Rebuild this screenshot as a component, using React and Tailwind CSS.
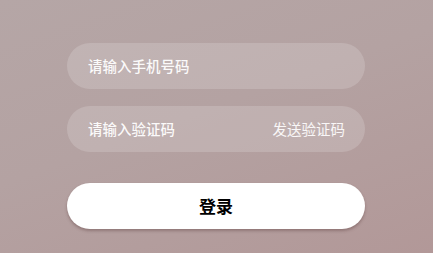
export default function App() {
  return (
    <div
      className="w-[433px] h-[253px] overflow-hidden bg-[linear-gradient(160deg,#b5a6a6_0%,#b4a2a2_45%,#b29898_100%)] flex flex-col"
      style={{ fontFamily: '"Noto Sans CJK SC", "Noto Sans", sans-serif' }}
    >
      <div className="w-[298px] ml-[67px] mt-[43px] flex flex-col">
        <div className="h-[46px] rounded-full bg-white/[0.17] flex items-center px-[21px]">
          <span className="text-[14.5px] font-medium text-white/95">请输入手机号码</span>
        </div>
        <div className="h-[46px] mt-[17px] rounded-full bg-white/[0.17] flex items-center justify-between pl-[21px] pr-[20px]">
          <span className="text-[14.5px] font-medium text-white/95">请输入验证码</span>
          <span className="text-[14.5px] text-white/90">发送验证码</span>
        </div>
        <button
          type="button"
          className="h-[46px] mt-[31px] rounded-full bg-white shadow-[0_2px_3px_rgba(80,50,50,0.35)] flex items-center justify-center"
        >
          <span className="text-[17px] font-bold text-black">登录</span>
        </button>
      </div>
    </div>
  );
}
